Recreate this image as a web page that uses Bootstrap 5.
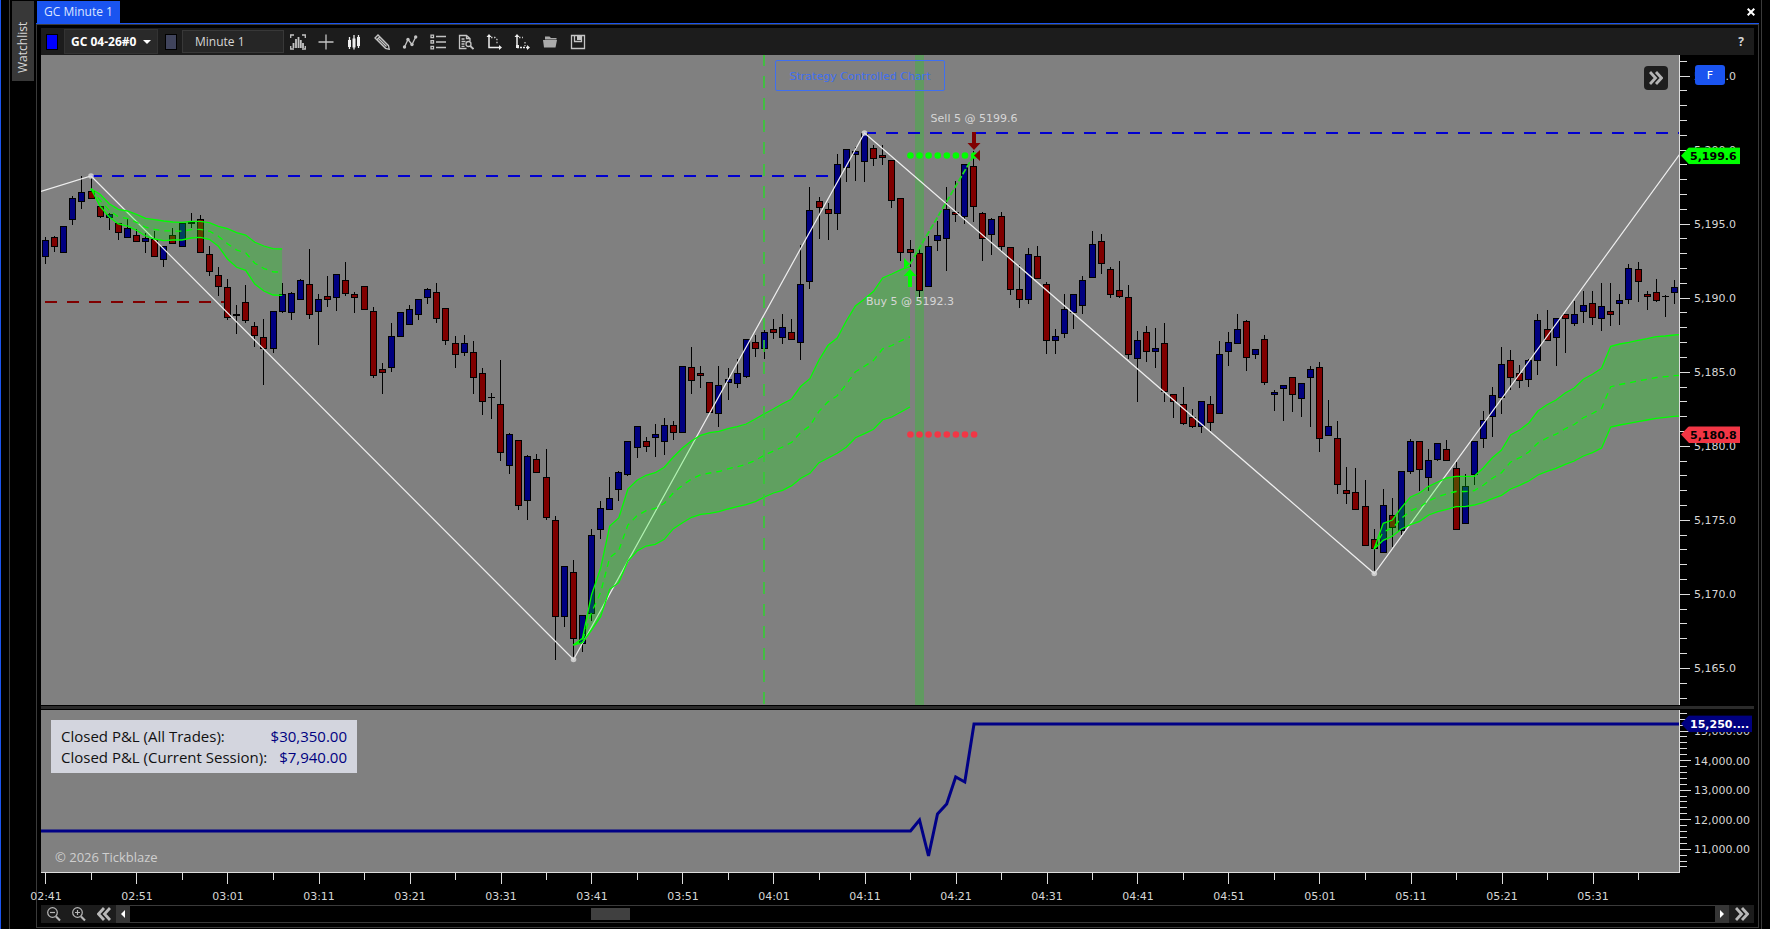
<!DOCTYPE html>
<html lang="en">
<head>
<meta charset="utf-8">
<meta name="viewport" content="width=device-width, initial-scale=1">
<title>GC Minute 1</title>
<link rel="stylesheet" href="https://cdn.jsdelivr.net/npm/bootstrap@5.3.0/dist/css/bootstrap.min.css">
<style>
:root { --edge:#3a3a3a; --bar:#1c1c1c; --accent:#1a54f0; --plot:#808080; --ink:#d6d6d6; }
body { background:#000; color:var(--ink); font:12px/16px "Open Sans",sans-serif; border-left:1px solid var(--accent); }
button { background:none; border:0; padding:0; color:inherit; line-height:1; }
svg { display:block; }
.side-rail { width:27px; margin-left:8px; border-left:1px solid var(--edge); padding:1px 0 0 2px; }
.rail-tab { width:22px; height:80px; background:#383838; writing-mode:vertical-rl; transform:rotate(180deg); font-size:12px; padding-top:8px; }
.main-win { min-width:0; border-right:1px solid var(--edge); margin-right:8px; padding-right:2px; }
.tab-strip { height:23px; padding-top:1px; }
.doc-tab { width:83px; height:22px; background:var(--accent); color:#dce4ff; font-size:12px; margin-left:1px; text-decoration:none; }
.close-x { width:16px; display:flex; justify-content:center; }
.frame { border:1px solid var(--edge); box-shadow:0 -1px 0 var(--accent); margin-top:1px; padding:3px 4px 4px; margin-bottom:1px; min-height:0; }
.tool-bar { height:27px; background:var(--bar); padding:0 6px 0 5px; }
.swatch { width:12px; height:16px; border:1px solid #000; }
.symbol-pick { width:94px; height:25px; margin:0 7px 0 6px; padding:0 20px 0 6px; border:1px solid #333; border-radius:0; color:#fff; font-size:12px; font-weight:700; background:#292929 url("data:image/svg+xml,%3Csvg xmlns='http://www.w3.org/2000/svg' viewBox='0 0 8 4'%3E%3Cpath fill='%23fff' d='M0 0h8L4 4z'/%3E%3C/svg%3E") no-repeat right 6px center/8px 4px; line-height:16px; }
.period-box { width:102px; height:23px; margin:0 0 0 5px; border:1px solid #383838; border-radius:0; background:#262626; color:var(--ink); font-size:12px; padding:0 12px; line-height:16px; }
.tool { width:28px; height:27px; display:flex; align-items:center; justify-content:center; color:#c4c4c4; }
.tool svg { width:16px; height:16px; fill:none; stroke:currentColor; stroke-width:1.3; }
.chart-grid { display:grid; grid-template-columns:minmax(0,1fr) 74px; grid-template-rows:minmax(0,650fr) 5px minmax(0,162fr) 33px; min-height:0; }
.pane { position:relative; background:var(--plot); border-right:1px solid #ddd; overflow:hidden; }
.pane > svg, .scale > svg { position:absolute; inset:0; width:100%; height:100%; }
.scale { position:relative; }
.scale > svg { overflow:visible; }
.splitter { grid-column:1 / 3; background:#2b2b2b; border:solid #000; border-width:1px 0; }
.time-scale { border-top:1px solid #ddd; }
svg text { font-family:"DejaVu Sans",Verdana,sans-serif; font-size:11px; fill:#d6d6d6; }
.mode-note { position:absolute; left:45%; top:5px; width:170px; height:31px; border:1px solid #3f6ff0; border-radius:2px; color:#3f6ff0; font:11px/31px "DejaVu Sans",sans-serif; text-align:center; white-space:nowrap; }
.expand { position:absolute; top:11px; right:11px; width:24px; height:24px; border-radius:4px; background:#1e1e1e; color:#b4b4b4; }
.fix-btn { position:absolute; left:15px; top:10px; width:30px; height:20px; border-radius:3px; background:var(--accent); color:#fff; font:11px/22px "DejaVu Sans",sans-serif; }
.flag { position:absolute; left:1px; height:17px; padding-left:9px; font:bold 11px/17px "DejaVu Sans",sans-serif; clip-path:polygon(0 50%,8px 0,100% 0,100% 100%,8px 100%); color:#000; width:59px; transform:translateY(-50%); }
.flag.equity { width:71px; color:#fff; background:#000080; }
.pnl { position:absolute; left:10px; top:10px; width:306px; height:53px; padding:6px 10px 5px; background:#d3d5de; font-size:15px; line-height:21px; color:#111; }
.pnl td { padding:0; white-space:nowrap; }
.pnl td + td { text-align:right; color:#000080; }
.credit { position:absolute; left:14px; bottom:7px; font-size:13px; line-height:16px; color:#cfcfcf; }
.scroll-row { height:18px; background:var(--bar); color:#b8b8b8; }
.scroll-row button { height:18px; display:flex; align-items:center; justify-content:center; }
.zoom-btn { width:25px; }
.step-btn { width:14px; background:#363636; color:#fff; }
.time-slide { flex:1; min-width:0; height:18px; margin:0; appearance:none; background:#000; border:solid var(--edge); border-width:1px 0; }
.time-slide::-webkit-slider-thumb { appearance:none; width:39px; height:12px; background:#404040; }
</style>
</head>
<body class="d-flex vh-100 overflow-hidden">
<aside class="side-rail flex-shrink-0">
  <button class="rail-tab d-flex align-items-center justify-content-start">Watchlist</button>
</aside>
<main class="main-win flex-fill d-flex flex-column">
  <div class="tab-strip d-flex justify-content-between align-items-center">
    <a href="#chart" class="doc-tab d-flex align-items-center justify-content-center">GC Minute 1</a>
    <button class="close-x" aria-label="Close"><svg width="8" height="8" viewBox="0 0 8 8" stroke="#fff" stroke-width="2"><path d="M.7.7l6.6 6.6M7.3.7L.7 7.3"/></svg></button>
  </div>
  <section class="frame flex-fill d-flex flex-column" id="chart">
    <div class="tool-bar d-flex align-items-center">
      <button class="swatch" style="background:#00f" aria-label="Link colour"></button>
      <select class="symbol-pick form-select" aria-label="Symbol"><option>GC 04-26#0</option></select>
      <button class="swatch" style="background:#40445c" aria-label="Period link"></button>
      <input class="period-box" value="Minute 1" aria-label="Period">
      <button class="tool" aria-label="Data range"><svg viewBox="0 0 16 16"><path d="M.7 4V1H4M12 1h3.300v3M.7 12v3H4M12 15h3.300v-3"/><path stroke-width="1.800" d="M3.500 14V9M6 14V5M8.500 14V3M10.800 14V6M13 14V9"/></svg></button>
      <button class="tool" aria-label="Crosshair"><svg viewBox="0 0 16 16"><path d="M8 .5v15M.5 8h15"/></svg></button>
      <button class="tool" aria-label="Bar style"><svg viewBox="0 0 16 16"><path stroke="#eee" d="M3.500 3v12M8 1v14.500M12.500 1v13"/><path stroke="#eee" stroke-width="3" d="M3.500 6v7M8 4.500v9M12.500 3v9"/></svg></button>
      <button class="tool" aria-label="Draw"><svg viewBox="0 0 16 16"><path d="M1 4l3-3 10.500 10.500.7 3.800-3.700-.8zM2.800 5.800l3-3M4.500 4.500l8 8M3.300 6l8.500 8.500M6 3.300l8.500 8.500"/></svg></button>
      <button class="tool" aria-label="Indicators"><svg viewBox="0 0 16 16"><path d="M2.500 13L6 5.500l4 5L13.700 3"/><g fill="#c4c4c4" stroke="none"><circle cx="2.500" cy="13" r="1.700"/><circle cx="6" cy="5.500" r="1.700"/><circle cx="10" cy="10.500" r="1.700"/><circle cx="13.700" cy="3" r="1.700"/></g></svg></button>
      <button class="tool" aria-label="Object list"><svg viewBox="0 0 16 16"><path d="M6 2.500h10M6 8h10M6 13.500h10M1 1.200h2.500v2.500H1zM1 6.700h2.500v2.500H1zM1 12.300h2.500v2.500H1z"/></svg></button>
      <button class="tool" aria-label="Data inspector"><svg viewBox="0 0 16 16"><path d="M8.500 14.500h-7V1.500h7l3.500 3V7M8.500 1.500v3H12M3.500 5h3M3.500 7.500h4M3.500 10h3M3.500 12.300h3"/><circle cx="10.500" cy="10" r="2.500"/><path stroke-width="1.800" d="M12.300 12l3.200 3"/></svg></button>
      <button class="tool" aria-label="Scale time"><svg viewBox="0 0 16 16"><path stroke="#eee" stroke-width="1.500" d="M3 2v11.500h11"/><path fill="#eee" stroke="none" d="M3 0l2.500 3h-5zM16 13.500l-3 2.500v-5z"/><path stroke-dasharray="1.500 1.500" d="M5 3.500h4l2 2v5"/></svg></button>
      <button class="tool" aria-label="Scale price"><svg viewBox="0 0 16 16"><path stroke="#eee" stroke-width="1.500" d="M3 2v9.500"/><path stroke="#eee" d="M3 13.500h11" stroke-dasharray="2 1"/><path fill="#eee" stroke="none" d="M3 0l2.500 3h-5zM16 13.500l-3 2.500v-5zM2 11h3v3H2z"/><path stroke-dasharray="1.500 1.500" d="M5 3.500h4M11 8v4"/></svg></button>
      <button class="tool" aria-label="Open template"><svg viewBox="0 0 16 16"><path fill="#aaa" stroke="none" d="M3 4V2.500h4.500L9 4h5.500v1.500H3zM1 6h14l-1.500 7.500H2z"/></svg></button>
      <button class="tool" aria-label="Save template"><svg viewBox="0 0 16 16"><path d="M1.500 1.500h13v13h-13zM4.500 1.500v6h7v-6"/><path fill="#c4c4c4" stroke="none" d="M7 2h4v4H7z"/></svg></button>
      <button class="ms-auto me-1 fw-bold" aria-label="Help">?</button>
    </div>

    <div class="chart-grid flex-fill">
      <div class="pane">
        <svg id="price" viewBox="41 55 1638 650" preserveAspectRatio="none" aria-label="Price chart"></svg>
        <svg id="notes"></svg>
        <div class="mode-note" id="mode">Strategy Controlled Chart</div>
        <button class="expand d-flex align-items-center justify-content-center" aria-label="Expand"><svg width="14" height="14" viewBox="0 0 14 14" fill="none" stroke="currentColor" stroke-width="2.800"><path d="M1 1l5.500 6L1 13M7 1l5.500 6L7 13"/></svg></button>
      </div>
      <div class="scale">
        <svg id="priceScale"></svg>
        <div class="flag" style="top:15.500%;background:#0f0">5,199.6</div>
        <div class="flag" style="top:58.400%;background:#f23645">5,180.8</div>
        <button class="fix-btn">F</button>
      </div>
      <div class="splitter"></div>
      <div class="pane">
        <svg viewBox="41 710 1638 162" preserveAspectRatio="none" aria-label="Equity curve"><path fill="none" stroke="#000086" stroke-width="3" d="M41 831H910.500L919.500 820 928.500 856 937.500 814 946.700 804 955.700 777 964.800 782 974 724H1679"/></svg>
        <table class="pnl d-block"><tbody class="d-block">
          <tr class="d-flex justify-content-between"><td>Closed P&amp;L (All Trades):</td><td>$30,350.00</td></tr>
          <tr class="d-flex justify-content-between"><td>Closed P&amp;L (Current Session):</td><td>$7,940.00</td></tr>
        </tbody></table>
        <div class="credit">© 2026 Tickblaze</div>
      </div>
      <div class="scale">
        <svg id="equityScale"></svg>
        <div class="flag equity" style="top:8.500%">15,250....</div>
      </div>
      <div class="scale time-scale"><svg id="timeScale"></svg></div>
    </div>

    <div class="scroll-row d-flex align-items-center">
      <button class="zoom-btn" aria-label="Zoom out"><svg width="16" height="16" viewBox="0 0 16 16" fill="none" stroke="currentColor" stroke-width="1.200"><circle cx="6.500" cy="6.500" r="4.800"/><path d="M4 6.500h5"/><path stroke-width="2.200" d="M10 10.500l4 4"/></svg></button>
      <button class="zoom-btn" aria-label="Zoom in"><svg width="16" height="16" viewBox="0 0 16 16" fill="none" stroke="currentColor" stroke-width="1.200"><circle cx="6.500" cy="6.500" r="4.800"/><path d="M4 6.500h5M6.500 4v5"/><path stroke-width="2.200" d="M10 10.500l4 4"/></svg></button>
      <button class="zoom-btn" aria-label="Jump back"><svg width="14" height="14" viewBox="0 0 14 14" fill="none" stroke="currentColor" stroke-width="2.800"><path d="M7 1L1.500 7 7 13M13 1L7.500 7l5.500 6"/></svg></button>
      <button class="step-btn" aria-label="Step back"><svg width="4" height="8" viewBox="0 0 4 8" fill="currentColor"><path d="M4 0v8L0 4z"/></svg></button>
      <input class="time-slide" type="range" min="0" max="1000" value="298" aria-label="Scroll through time">
      <button class="step-btn" aria-label="Step forward"><svg width="4" height="8" viewBox="0 0 4 8" fill="currentColor"><path d="M0 0v8l4-4z"/></svg></button>
      <button class="zoom-btn" aria-label="Jump to latest"><svg width="14" height="14" viewBox="0 0 14 14" fill="none" stroke="currentColor" stroke-width="2.800"><path d="M1 1l5.500 6L1 13M7 1l5.500 6L7 13"/></svg></button>
    </div>
  </section>
</main>

<script>
// One entry per minute from 02:41: colour, high, body top, body bottom, low.
// Heights are on the chart's own scale of three steps per drawing unit.
const candles = `b 711 720 771 791|r 708 711 741 756|b 678 678 758 758|b 589 594 660 674|b 528 576 606 627|r 534 573 597 597|r 618 618 651 654|b 640 642 654 690|r 669 669 699 720|b 657 684 714 714|r 687 705 726 726|b 700 714 726 759|r 693 717 771 771|b 738 738 780 801|r 684 705 732 732|b 669 669 741 741|k 639 666 672 684|r 645 657 759 759|r 738 762 816 828|r 801 825 861 888
r 837 861 954 960|k 915 942 948 1002|r 855 906 963 969|r 966 978 1008 1040|r 957 1011 1047 1155|b 933 933 1047 1059|b 849 882 936 939|b 876 879 939 960|b 837 840 900 900|r 747 852 945 957|b 882 897 936 1035|r 828 888 900 921|b 822 822 894 933|r 786 840 882 888|r 876 882 894 939|r 858 858 930 930|r 921 933 1128 1134|r 1089 1107 1119 1182|b 969 1008 1104 1116|b 936 936 1011 1011
b 915 927 975 975|b 897 897 945 960|b 864 867 894 912|r 849 876 957 969|r 924 924 1023 1035|r 1008 1029 1065 1104|b 1005 1029 1059 1068|r 1023 1056 1134 1182|r 1104 1119 1206 1245|k 1179 1190 1193 1257|r 1080 1212 1359 1383|b 1299 1302 1398 1422|r 1320 1320 1518 1530|b 1365 1368 1503 1560|r 1362 1377 1419 1419|r 1347 1431 1554 1560|r 1548 1560 1851 1980|b 1698 1698 1851 1881|r 1680 1716 1917 1974|b 1845 1845 1932 1956
b 1587 1605 1842 1863|b 1503 1524 1590 1617|b 1431 1494 1530 1530|b 1413 1416 1470 1503|b 1323 1323 1425 1428|b 1278 1278 1344 1374|r 1311 1323 1341 1356|b 1272 1302 1314 1371|b 1254 1275 1326 1365|r 1263 1275 1299 1320|b 1098 1098 1299 1299|r 1041 1101 1143 1182|r 1098 1118 1128 1164|r 1146 1146 1239 1239|b 1098 1155 1242 1281|b 1104 1137 1149 1200|b 1077 1119 1152 1164|b 1017 1017 1131 1134|r 1005 1026 1047 1071|b 990 996 1047 1077
r 957 987 999 1017|b 942 981 1014 1032|r 957 996 1020 1020|b 735 852 1029 1080|b 561 630 846 867|r 591 603 624 717|r 609 627 642 720|b 462 492 642 690|b 447 447 504 546|b 441 453 465 543|b 399 399 486 546|r 435 444 477 498|r 435 465 474 495|r 480 480 603 624|r 594 594 759 783|r 720 747 759 801|r 747 759 873 894|b 708 738 861 861|b 663 705 723 753|b 561 627 717 813
r 543 636 645 666|b 492 492 651 672|r 453 498 621 666|r 636 639 717 783|b 654 657 705 765|r 636 648 741 753|r 741 741 870 885|r 795 867 900 924|b 744 762 900 912|r 738 768 837 837|r 846 852 1023 1062|b 987 1008 1023 1062|b 882 927 1002 1014|b 882 882 939 987|b 828 840 918 942|b 693 732 834 834|r 702 723 792 822|r 801 807 885 894|r 783 870 891 894|r 855 891 1065 1077
b 993 1020 1077 1206|r 978 996 1056 1086|b 984 1044 1056 1104|r 969 1029 1176 1206|r 1182 1182 1206 1254|r 1161 1212 1272 1275|r 1227 1251 1281 1284|b 1203 1203 1281 1299|r 1188 1212 1269 1293|b 1023 1062 1242 1242|b 996 1026 1056 1098|b 942 987 1032 1032|r 960 963 1074 1113|b 1047 1047 1065 1077|r 1005 1017 1149 1155|b 1170 1176 1185 1233|b 1155 1155 1167 1263|r 1131 1131 1185 1236|b 1149 1149 1197 1251|b 1098 1107 1134 1281
r 1086 1101 1317 1356|b 1200 1278 1308 1308|r 1263 1314 1455 1482|r 1401 1470 1482 1512|r 1404 1476 1530 1530|r 1440 1518 1638 1638|r 1587 1617 1647 1720|b 1467 1515 1659 1659|r 1494 1545 1584 1641|b 1413 1413 1593 1605|b 1317 1323 1416 1422|r 1323 1323 1410 1473|b 1347 1380 1434 1473|b 1329 1329 1380 1383|r 1320 1347 1383 1383|r 1386 1404 1590 1590|b 1422 1458 1572 1572|b 1323 1323 1425 1455|b 1233 1260 1317 1344|b 1161 1185 1251 1311
b 1041 1092 1194 1242|r 1050 1080 1134 1170|r 1095 1119 1143 1164|b 1077 1080 1140 1161|b 942 960 1083 1125|r 930 987 1023 1023|b 954 954 1014 1098|r 942 942 957 1059|b 903 942 972 978|b 873 915 936 969|r 873 909 954 975|b 849 918 957 993|r 849 933 945 978|b 882 900 912 975|b 792 804 900 912|r 786 807 846 906|r 873 882 891 930|r 837 876 903 906|k 885 888 891 951|b 840 861 879 912`
  .split(/[|\n]/).map(s => s.split(' '));

// Anchored VWAP bands: first candle, zero level, then upper and lower edges.
const bands = [
  { first:5, base:480,
    up:[86,103,131,148,153,163,175,179,183,186,187,184,184,188,199,206,218,225,247,258,266,267],
    lo:[86,139,171,192,198,211,228,237,242,240,240,234,232,238,259,297,322,331,372,393,405,406] },
  { first:58, base:840,
    up:[1095,1075,945,865,738,714,627,601,586,578,562,531,504,482,466,458,454,446,440,432,417,401,387,371,357,319,296,240,196,174,123,78,57,34,-6,-18,-31,-40],
    lo:[1095,1088,1050,1010,928,908,843,813,798,793,778,746,728,712,703,700,695,687,680,674,665,651,639,631,617,595,580,548,534,520,502,473,461,448,419,411,396,381] },
  { first:146, base:720,
    up:[927,850,840,803,771,759,739,726,714,709,709,709,684,653,630,585,570,549,513,494,480,459,444,418,403,385,319,312,307,301,296,290,288,285,283],
    lo:[927,901,889,867,854,844,825,815,808,800,800,795,787,776,766,747,736,723,705,694,685,673,663,648,638,624,561,555,550,545,540,535,532,529,528] }
];

const cx = i => 45.5 + 9.1 * i;
const px = i => Math.floor(cx(i));
let g = '<rect x="915" y="55" width="9" height="650" fill="#00e600" fill-opacity=".25"/>';
g += '<g stroke-width="2" stroke-dasharray="12 10" fill="none"><path stroke="#0000d0" d="M90 176H828M864 133H1679"/><path stroke="#800000" d="M45 302H225"/></g>';
g += '<g shape-rendering="crispEdges">';
candles.forEach(([c, h, t, b, l], i) => {
  const x = px(i), r = v => Math.round(v / 3);
  g += `<rect x="${x}" y="${r(h)}" width="1" height="${r(l) - r(h)}"/><rect x="${x - 3}" y="${r(t)}" width="7" height="${Math.max(1, r(b) - r(t))}"/>`;
  if (c !== 'k') g += `<rect x="${x - 2}" y="${r(t) + 1}" width="5" height="${Math.max(1, r(b) - r(t) - 2)}" fill="${c === 'r' ? '#800000' : '#000080'}"/>`;
});
g += '</g><path d="M41 191.500L91 176 573.500 659.500 864.500 133 1374.300 573.500 1679.500 154.500" fill="none" stroke="#eee" stroke-width="1.200"/>';
[[91,176],[573.5,659.5],[864.5,133],[1374.3,573.5]].forEach(p => g += `<circle cx="${p[0]}" cy="${p[1]}" r="2.800" fill="#ddd" fill-opacity=".8"/>`);
bands.forEach(b => {
  const pts = a => a.map((v, k) => [cx(b.first + k).toFixed(1), ((b.base + v) / 3).toFixed(1)].join());
  const up = pts(b.up), lo = pts(b.lo), mid = pts(b.up.map((v, k) => (v + b.lo[k]) / 2));
  g += `<polygon points="${up.concat([...lo].reverse()).join(' ')}" fill="#0f0" fill-opacity=".25"/><g fill="none" stroke="#0f0" stroke-width="1.300"><polyline points="${up.join(' ')}"/><polyline points="${lo.join(' ')}"/><polyline points="${mid.join(' ')}" stroke-dasharray="6 5"/></g>`;
});
g += '<path d="M764 54V705" stroke="#32cd32" stroke-opacity=".8" stroke-width="2" stroke-dasharray="12 10"/>';
g += '<path d="M910 264L974 155" stroke="#1fdc1f" stroke-width="1.800" stroke-dasharray="6 2"/>';
for (let i = 95; i < 103; i++) g += `<circle cx="${cx(i) + .4}" cy="155.500" r="3.300" fill="#0f0"/><circle cx="${cx(i) + .4}" cy="434.500" r="3.300" fill="#f23645"/>`;
g += '<path fill="#800000" d="M972 132h4v11h4.500l-6.500 7-6.500-7h4.500zM974 155.500l6-5.500v11z"/><path fill="#0f0" d="M908 287v-11h-4.500l6.500-7 6.500 7H912v11zM910 264l-6-6v11z"/>';
document.getElementById('price').innerHTML = g;

const pc = (v, total) => (v / total * 100).toFixed(3) + '%';
const label = (x, y, t, a = 'start') => `<text x="${x}" y="${y}" text-anchor="${a}">${t}</text>`;
document.getElementById('notes').innerHTML =
  label(pc(933, 1638), pc(67, 650), 'Sell 5 @ 5199.6', 'middle') + label(pc(869, 1638), pc(250, 650), 'Buy 5 @ 5192.3', 'middle');
document.getElementById('mode').style.left = pc(734, 1638);

const tick = (y, len) => `<line x1="0" x2="${len}" y1="${y}" y2="${y}" stroke="#ddd" shape-rendering="crispEdges"/>`;
let s = '';
for (let k = -1; k <= 42; k++) {
  const y = 21 + 14.81 * k, major = k % 5 === 0;
  s += tick(pc(y, 650), major ? 10 : 7);
  if (major) s += `<g transform="translate(0 4)">${label(14, pc(y, 650), (5205 - k).toLocaleString('en-US') + '.0')}</g>`;
}
document.getElementById('priceScale').innerHTML = s;

s = '';
for (let k = -3; k <= 23; k++) {
  const y = 21 + 5.91 * k, major = k % 5 === 0;
  s += tick(pc(y, 162), major ? 11 : 7);
  if (major && k <= 20) s += `<g transform="translate(0 4)">${label(14, pc(y, 162), (15000 - k * 200).toLocaleString('en-US') + '.00')}</g>`;
}
document.getElementById('equityScale').innerHTML = s;

s = '';
for (let i = 0; i < 180; i += 5) {
  const x = pc(cx(i) + .5 - 41, 1639), m = 161 + i;
  s += `<line x1="${x}" x2="${x}" y1="0" y2="${i % 10 ? 7 : 11}" stroke="#ddd" shape-rendering="crispEdges"/>`;
  if (i % 10 === 0) s += label(x, 27, `0${Math.floor(m / 60)}:${String(m % 60).padStart(2, '0')}`, 'middle');
}
document.getElementById('timeScale').innerHTML = s;
</script>
<script src="https://cdn.jsdelivr.net/npm/bootstrap@5.3.0/dist/js/bootstrap.bundle.min.js"></script>
</body>
</html>
